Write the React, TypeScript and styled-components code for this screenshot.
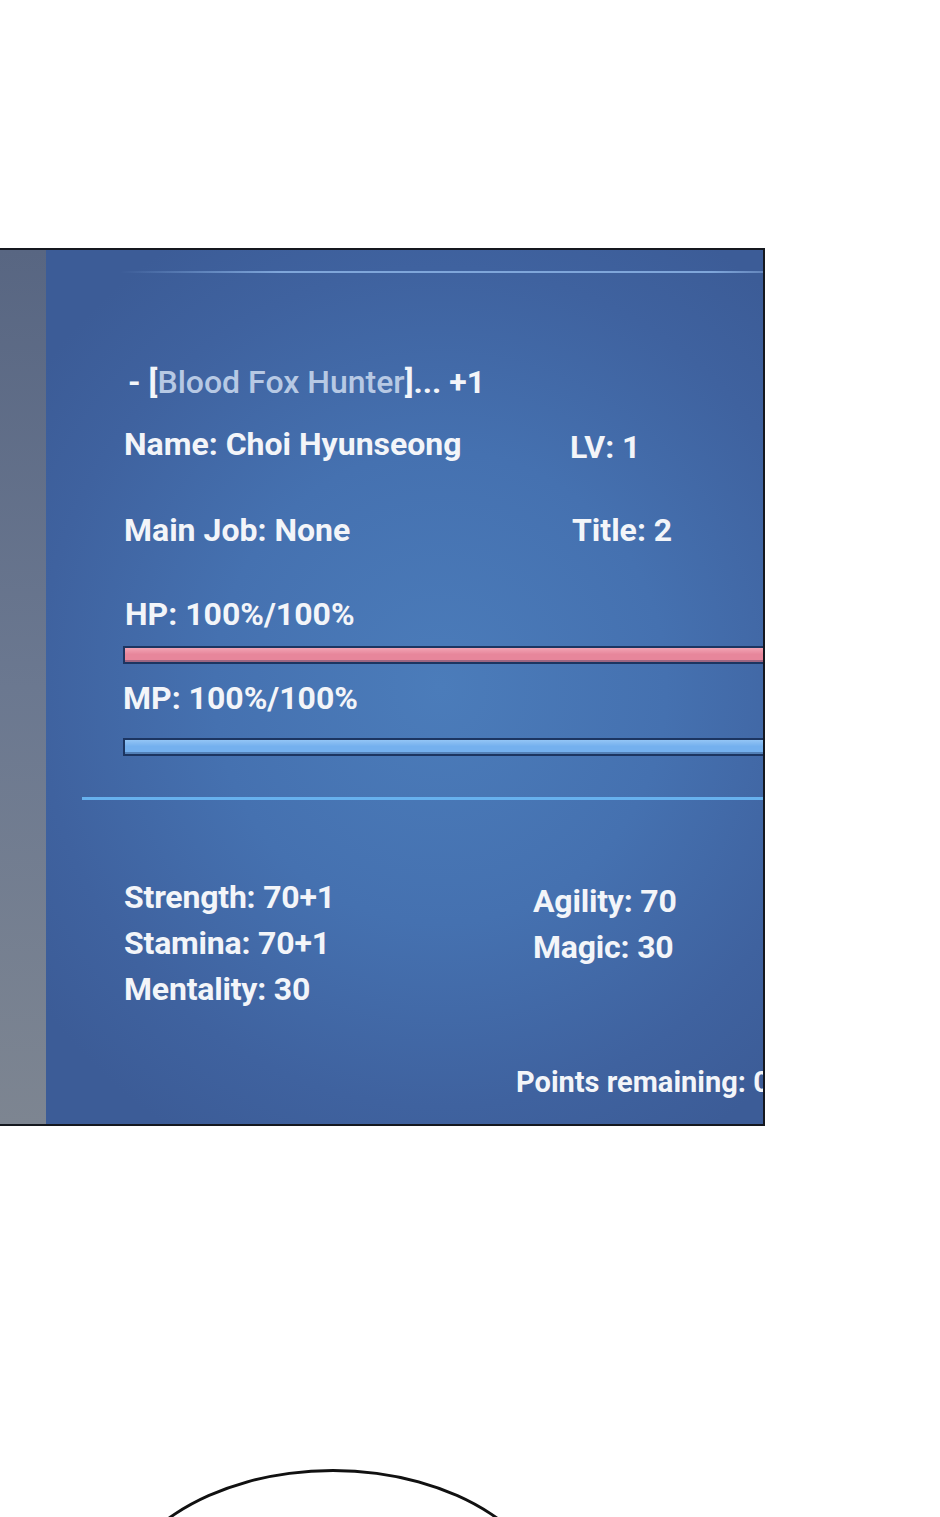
import React from "react";
import styled, { createGlobalStyle } from "styled-components";

const GlobalStyle = createGlobalStyle`
  html, body {
    margin: 0;
    padding: 0;
    background: #fff;
    overflow: hidden;
  }
  body {
    font-family: Roboto, "Liberation Sans", sans-serif;
  }
`;

const Page = styled.div`
  width: 940px;
  height: 1517px;
  padding-top: 248px;
  box-sizing: border-box;
  overflow: hidden;
`;

const Panel = styled.div`
  width: 765px;
  box-sizing: border-box;
  border-top: 2px solid #15181f;
  border-bottom: 2px solid #15181f;
  border-right: 2px solid #15181f;
  display: flex;
`;

const Strip = styled.div`
  width: 46px;
  flex-shrink: 0;
  background: linear-gradient(180deg, #586682 0%, #6b7890 50%, #7d8591 100%);
`;

const Main = styled.div`
  flex: 1;
  overflow: hidden;
  display: flex;
  flex-direction: column;
  background:
    radial-gradient(ellipse 70% 60% at 55% 50%, #4b7cba 0%, #4571b0 45%, #3f629f 80%, #3c5c97 100%);
  padding-bottom: 24px;
`;

const Rule = styled.div<{ $top: number; $left: number; $h: number; $color: string; $fade?: boolean }>`
  margin-top: ${(p) => p.$top}px;
  margin-left: ${(p) => p.$left}px;
  height: ${(p) => p.$h}px;
  background: ${(p) =>
    p.$fade
      ? `linear-gradient(90deg, rgba(140,175,225,0) 0%, ${p.$color} 25%, ${p.$color} 92%, rgba(140,175,225,0.5) 100%)`
      : p.$color};
`;

const Row = styled.div<{ $top: number; $left?: number }>`
  margin-top: ${(p) => p.$top}px;
  padding-left: ${(p) => p.$left ?? 78}px;
  display: flex;
  align-items: flex-start;
`;

const Label = styled.div<{ $w?: number; $size?: number; $shift?: number }>`
  width: ${(p) => (p.$w ? `${p.$w}px` : "auto")};
  flex-shrink: 0;
  font-size: ${(p) => p.$size ?? 32}px;
  line-height: 36px;
  font-weight: 700;
  color: #f3f5f9;
  white-space: nowrap;
  transform: translateY(${(p) => p.$shift ?? 0}px);
`;

const Dim = styled.span`
  color: #b7c9e4;
  font-weight: 500;
`;

const Bar = styled.div<{ $top: number; $fill: string; $hi: string }>`
  margin-top: ${(p) => p.$top}px;
  margin-left: 77px;
  height: 18px;
  box-sizing: border-box;
  border: 2px solid #1c3561;
  border-right: none;
  background: linear-gradient(180deg, ${(p) => p.$hi} 0%, ${(p) => p.$fill} 45%, ${(p) => p.$fill} 100%);
  box-shadow: inset 0 -2px 0 rgba(20, 40, 80, 0.35);
`;

const Stats = styled.div`
  margin-top: 74px;
  padding-left: 78px;
  display: flex;
`;

const StatCol = styled.div<{ $w?: number; $shift?: number }>`
  width: ${(p) => (p.$w ? `${p.$w}px` : "auto")};
  flex-shrink: 0;
  padding-top: ${(p) => p.$shift ?? 0}px;
`;

const Stat = styled.div`
  font-size: 32px;
  line-height: 46px;
  font-weight: 700;
  color: #f3f5f9;
  white-space: nowrap;
  letter-spacing: -0.2px;
`;

const Bubble = styled.div`
  margin-top: 343px;
  margin-left: 108px;
  width: 450px;
  height: 300px;
  box-sizing: border-box;
  border: 3px solid #111;
  border-radius: 50%;
`;

export default function App() {
  return (
    <Page>
      <GlobalStyle />
      <Panel>
        <Strip />
        <Main>
          <Rule $top={21} $left={74} $h={2} $color="#7fa6da" $fade />
          <Row $top={91} $left={82}>
            <Label>
              - [<Dim>Blood Fox Hunter</Dim>]... +1
            </Label>
          </Row>
          <Row $top={26}>
            <Label $w={446}>Name: Choi Hyunseong</Label>
            <Label $shift={3}>LV: 1</Label>
          </Row>
          <Row $top={50}>
            <Label $w={448}>Main Job: None</Label>
            <Label>Title: 2</Label>
          </Row>
          <Row $top={48} $left={79}>
            <Label>HP: 100%/100%</Label>
          </Row>
          <Bar $top={14} $fill="#e7869b" $hi="#f2a4b4" />
          <Row $top={16} $left={77}>
            <Label>MP: 100%/100%</Label>
          </Row>
          <Bar $top={22} $fill="#74b0ee" $hi="#93c5f5" />
          <Rule $top={41} $left={36} $h={3} $color="#67b1ee" />
          <Stats>
            <StatCol $w={409}>
              <Stat>Strength: 70+1</Stat>
              <Stat>Stamina: 70+1</Stat>
              <Stat>Mentality: 30</Stat>
            </StatCol>
            <StatCol $shift={4}>
              <Stat>Agility: 70</Stat>
              <Stat>Magic: 30</Stat>
            </StatCol>
          </Stats>
          <Row $top={52} $left={470}>
            <Label $size={29}>Points remaining: 0</Label>
          </Row>
        </Main>
      </Panel>
      <Bubble />
    </Page>
  );
}
